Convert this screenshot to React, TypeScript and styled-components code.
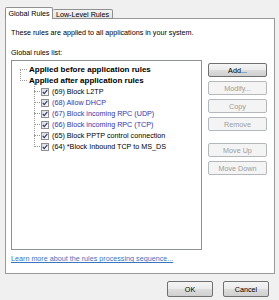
import React from "react";
import styled, { createGlobalStyle } from "styled-components";

const GlobalStyle = createGlobalStyle`
  html, body {
    margin: 0;
    padding: 0;
    background: #f0f0f0;
  }
  body {
    font-family: "Liberation Sans", Arial, sans-serif;
    font-size: 7.2px;
    color: #000;
  }
`;

const Window = styled.div`
  width: 279px;
  height: 300px;
  box-sizing: border-box;
  padding: 7px 4px 0 5px;
  display: flex;
  flex-direction: column;
`;

const TabStrip = styled.div`
  display: flex;
  align-items: flex-end;
  height: 12px;
  margin-bottom: -1px;
  position: relative;
  z-index: 1;
`;

const Tab = styled.div<{ $active?: boolean; $w: number }>`
  box-sizing: border-box;
  width: ${(p) => p.$w}px;
  height: ${(p) => (p.$active ? 12 : 10)}px;
  border: 1px solid #8e8f8f;
  border-bottom: ${(p) => (p.$active ? "none" : "1px solid #8e8f8f")};
  border-left: ${(p) => (p.$active ? "1px solid #8e8f8f" : "none")};
  border-radius: 2px 2px 0 0;
  background: ${(p) =>
    p.$active ? "#fff" : "linear-gradient(#f5f5f5, #e3e3e3)"};
  display: flex;
  align-items: center;
  justify-content: center;
  padding-bottom: ${(p) => (p.$active ? 1 : 0)}px;
  white-space: nowrap;
`;

const Panel = styled.div`
  box-sizing: border-box;
  height: 256px;
  width: 270px;
  border: 1px solid #999;
  background: #fff;
  padding: 0 5px;
  display: flex;
  flex-direction: column;
`;

const Intro = styled.div`
  line-height: 9px;
  margin-top: 9px;
  white-space: nowrap;
`;

const Label = styled.div`
  line-height: 9px;
  margin-top: 11px;
`;

const ListRow = styled.div`
  display: flex;
  margin-top: 3px;
`;

const ListBox = styled.div`
  box-sizing: border-box;
  width: 191px;
  height: 190px;
  border: 1px solid #8d9097;
  background: #fff;
  padding-top: 3px;
`;

const Branch = styled.div<{ $x: number; $top: number; $bottom: number }>`
  position: relative;
  &::before {
    content: "";
    position: absolute;
    left: ${(p) => p.$x}px;
    top: ${(p) => p.$top}px;
    bottom: ${(p) => p.$bottom}px;
    border-left: 1px dotted #9a9a9a;
  }
`;

const Row = styled.div<{ $blue?: boolean }>`
  display: flex;
  align-items: center;
  height: 11px;
  white-space: nowrap;
  color: ${(p) => (p.$blue ? "#3434a8" : "#000")};
`;

const Connector = styled.span<{ $left: number; $w: number }>`
  flex: none;
  margin-left: ${(p) => p.$left}px;
  width: ${(p) => p.$w}px;
  border-top: 1px dotted #9a9a9a;
`;

const RootText = styled.span`
  font-weight: bold;
  font-size: 8px;
  margin-left: 2px;
`;

const Check = styled.span`
  flex: none;
  box-sizing: border-box;
  width: 8px;
  height: 8px;
  margin-left: 1px;
  border: 1px solid #8f8f8f;
  background: linear-gradient(135deg, #dcdcdc, #fbfbfb);
  display: flex;
  align-items: center;
  justify-content: center;
`;

const ItemText = styled.span`
  margin-left: 3px;
`;

const ButtonColumn = styled.div`
  display: flex;
  flex-direction: column;
  margin-left: 6px;
  padding-top: 3px;
  width: 59px;
`;

const Button = styled.div<{ $disabled?: boolean; $gap?: number }>`
  box-sizing: border-box;
  height: 14px;
  margin-top: ${(p) => p.$gap ?? 0}px;
  border: 1px solid ${(p) => (p.$disabled ? "#b5b8bb" : "#707070")};
  border-radius: 2px;
  background: ${(p) =>
    p.$disabled
      ? "#f4f4f4"
      : "linear-gradient(#f4f4f4 0%, #ebebeb 50%, #dddddd 51%, #cfcfcf 100%)"};
  color: ${(p) => (p.$disabled ? "#9c9c9c" : "#000")};
  display: flex;
  align-items: center;
  justify-content: center;
  white-space: nowrap;
`;

const LearnLink = styled.a`
  margin-top: 4px;
  line-height: 9px;
  color: #3a76c0;
  text-decoration: underline;
  white-space: nowrap;
`;

const Footer = styled.div`
  display: flex;
  justify-content: flex-end;
  gap: 10px;
  padding: 7px 6px 0 0;
`;

const DialogButton = styled(Button)`
  width: 46px;
  height: 16px;
`;

const CheckMark = () => (
  <svg width="6" height="6" viewBox="0 0 6 6">
    <polyline
      points="0.8,3 2.3,4.6 5.3,0.9"
      fill="none"
      stroke="#2f3d70"
      strokeWidth="1.2"
    />
  </svg>
);

const rules = [
  { id: 69, name: "Block L2TP", blue: false },
  { id: 68, name: "Allow DHCP", blue: true },
  { id: 67, name: "Block incoming RPC (UDP)", blue: true },
  { id: 66, name: "Block incoming RPC (TCP)", blue: true },
  { id: 65, name: "Block PPTP control connection", blue: false },
  { id: 64, name: "*Block Inbound TCP to MS_DS", blue: false },
];

export default function App() {
  return (
    <Window>
      <GlobalStyle />
      <TabStrip>
        <Tab $active $w={48}>Global Rules</Tab>
        <Tab $w={60}>Low-Level Rules</Tab>
      </TabStrip>
      <Panel>
        <Intro>These rules are applied to all applications in your system.</Intro>
        <Label>Global rules list:</Label>
        <ListRow>
          <ListBox>
            <Branch $x={8} $top={5} $bottom={5}>
              <Row>
                <Connector $left={8} $w={7} />
                <RootText>Applied before application rules</RootText>
              </Row>
              <Row>
                <Connector $left={8} $w={7} />
                <RootText>Applied after application rules</RootText>
              </Row>
            </Branch>
            <Branch $x={22} $top={-3} $bottom={5}>
              {rules.map((r) => (
                <Row key={r.id} $blue={r.blue}>
                  <Connector $left={22} $w={6} />
                  <Check>
                    <CheckMark />
                  </Check>
                  <ItemText>
                    ({r.id}) {r.name}
                  </ItemText>
                </Row>
              ))}
            </Branch>
          </ListBox>
          <ButtonColumn>
            <Button>Add...</Button>
            <Button $disabled $gap={4}>Modify...</Button>
            <Button $disabled $gap={4}>Copy</Button>
            <Button $disabled $gap={4}>Remove</Button>
            <Button $disabled $gap={12}>Move Up</Button>
            <Button $disabled $gap={4}>Move Down</Button>
          </ButtonColumn>
        </ListRow>
        <LearnLink>Learn more about the rules processing sequence...</LearnLink>
      </Panel>
      <Footer>
        <DialogButton>OK</DialogButton>
        <DialogButton>Cancel</DialogButton>
      </Footer>
    </Window>
  );
}
